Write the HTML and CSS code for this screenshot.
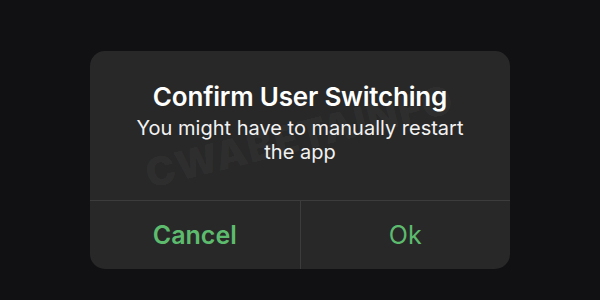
FILE: index.html
```html
<!DOCTYPE html>
<html>
<head>
<meta charset="utf-8">
<link rel="stylesheet" href="styles.css">
</head>
<body>
<div class="alert">
  <div class="watermark">CWABETAINFO</div>
  <div class="alert-body">
    <div class="alert-title">Confirm User Switching</div>
    <div class="alert-message">You might have to manually restart<br>the app</div>
  </div>
  <div class="alert-actions">
    <div class="action action-cancel">Cancel</div>
    <div class="action action-ok">Ok</div>
  </div>
</div>
</body>
</html>
```

FILE: styles.css
```css
html, body {
  margin: 0;
  padding: 0;
  background: #111113;
  width: 600px;
  height: 300px;
  overflow: hidden;
}
body {
  padding-top: 51px;
  box-sizing: border-box;
  font-family: Inter, "Noto Sans", sans-serif;
}
.alert {
  position: relative;
  width: 420px;
  height: 218px;
  margin: 0 auto;
  background: #282828;
  border-radius: 15px;
  overflow: hidden;
  display: flex;
  flex-direction: column;
}
.watermark {
  position: absolute;
  left: 56px;
  top: 100px;
  font-size: 40px;
  line-height: 48px;
  font-weight: 900;
  letter-spacing: 1px;
  color: rgba(255,255,255,0.035);
  transform: rotate(-14deg);
  transform-origin: left center;
  white-space: nowrap;
  pointer-events: none;
}
.alert-body {
  height: 149px;
  box-sizing: border-box;
  padding-top: 30px;
  text-align: center;
  color: #ffffff;
  position: relative;
}
.alert-title {
  font-size: 26px;
  font-weight: 600;
  line-height: 32px;
  letter-spacing: -0.2px;
}
.alert-message {
  margin-top: 3px;
  font-size: 20px;
  font-weight: 400;
  line-height: 24px;
  color: #f2f2f2;
}
.alert-actions {
  flex: 1;
  display: flex;
  border-top: 1px solid #3c3c3c;
  position: relative;
}
.action {
  flex: 1;
  display: flex;
  align-items: center;
  justify-content: center;
  color: #5dbb6e;
  font-size: 25px;
}
.action-cancel {
  font-weight: 600;
  border-right: 1px solid #3c3c3c;
}
.action-ok {
  font-weight: 400;
}
```
